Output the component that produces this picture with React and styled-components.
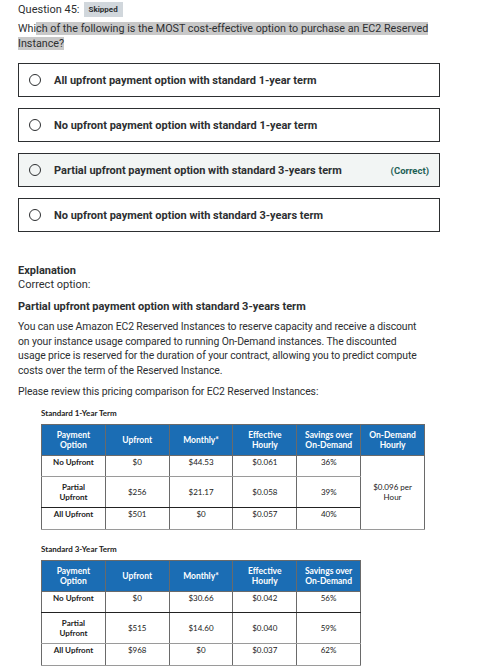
import React from 'react'
import styled, { createGlobalStyle } from 'styled-components'

const GlobalStyle = createGlobalStyle`
  body {
    margin: 0;
    background: #ffffff;
    color: #2d2f31;
    font-family: Roboto, "Liberation Sans", sans-serif;
  }
`;

const Page = styled.div`
  width: 422px;
  padding: 2px 0 0 18px;
`;

const QuestionHeader = styled.div`
  display: flex;
  align-items: center;
  gap: 4px;
  height: 15px;
  font-size: 11px;
`;

const Badge = styled.span`
  background: #d1d7dc;
  font-size: 8px;
  font-weight: 700;
  padding: 3px 5px;
  line-height: 9px;
`;

const Prompt = styled.p`
  margin: 4px 0 0;
  font-size: 10.75px;
  line-height: 15px;
`;

const Selected = styled.span`
  background: #c8c8c8;
`;

const Options = styled.div`
  display: flex;
  flex-direction: column;
  gap: 11px;
  margin-top: 12px;
`;

const Option = styled.div`
  display: flex;
  align-items: center;
  height: 32px;
  padding: 0 10px;
  border: 1px solid #2d2f31;
  background: ${(props) => (props.correct ? '#f2f5f4' : '#ffffff')};
`;

const Radio = styled.span`
  width: 10px;
  height: 10px;
  border: 1px solid #2d2f31;
  border-radius: 50%;
  flex-shrink: 0;
  margin-right: 13px;
`;

const OptionText = styled.span`
  flex: 1;
  font-size: 11px;
  font-weight: 700;
`;

const CorrectTag = styled.span`
  font-size: 9.5px;
  font-weight: 700;
  color: #1e6055;
`;

const Explanation = styled.div`
  margin-top: 32px;
  font-size: 11px;
  line-height: 14px;
`;

const Heading = styled.div`
  font-weight: 700;
`;

const Answer = styled.div`
  font-weight: 700;
  margin-top: 8px;
`;

const Para = styled.p`
  margin: 6px 0 0;
  font-size: 10.4px;
  letter-spacing: -0.1px;
  line-height: 14.7px;
`;

const TableBlock = styled.div`
  margin: ${(props) => props.top}px 0 0 23px;
  font-family: Lato, "Noto Sans", sans-serif;
  font-size: 8px;
`;

const TableTitle = styled.div`
  font-weight: 700;
  color: #222;
  margin-bottom: 6px;
`;

const Table = styled.table`
  border-collapse: collapse;
  table-layout: fixed;
  width: ${(props) => props.cols * 64}px;
  color: #222;
  text-align: center;
`;

const Head = styled.th`
  background: #1b6db4;
  color: #ffffff;
  font-weight: 700;
  font-size: 8.5px;
  height: 30px;
  line-height: 10px;
  padding: 0 2px;
  border: 1px solid #6a6a6a;
`;

const Cell = styled.td`
  height: ${(props) => props.h}px;
  line-height: 10px;
  padding: 0 2px;
  vertical-align: ${(props) => (props.mid ? 'middle' : 'top')};
  padding-top: ${(props) => (props.mid ? 0 : 1)}px;
  border-left: 1px solid #6a6a6a;
  border-right: 1px solid #6a6a6a;
  border-bottom: 1px solid ${(props) => (props.dark ? '#222' : '#9a9a9a')};
  font-weight: ${(props) => (props.label ? 700 : 400)};
`;

const oneYear = [
  ['No Upfront', '$0', '$44.53', '$0.061', '36%'],
  ['Partial Upfront', '$256', '$21.17', '$0.058', '39%'],
  ['All Upfront', '$501', '$0', '$0.057', '40%'],
];

const threeYear = [
  ['No Upfront', '$0', '$30.66', '$0.042', '56%'],
  ['Partial Upfront', '$515', '$14.60', '$0.040', '59%'],
  ['All Upfront', '$968', '$0', '$0.037', '62%'],
];

const heights = [19, 30, 20];

function Pricing({ title, rows, onDemand, darkRow, top }) {
  const cols = onDemand ? 6 : 5;
  return (
    <TableBlock top={top}>
      <TableTitle>{title}</TableTitle>
      <Table cols={cols}>
        <thead>
          <tr>
            <Head>Payment<br />Option</Head>
            <Head>Upfront</Head>
            <Head>Monthly*</Head>
            <Head>Effective<br />Hourly</Head>
            <Head>Savings over<br />On-Demand</Head>
            {onDemand && <Head>On-Demand<br />Hourly</Head>}
          </tr>
        </thead>
        <tbody>
          {rows.map((row, i) => (
            <tr key={row[0]}>
              {row.map((value, j) => (
                <Cell
                  key={j}
                  h={heights[i]}
                  mid={i === 1}
                  dark={i === darkRow}
                  label={j === 0}
                >
                  {j === 0 && i === 1 ? (
                    <>Partial<br />Upfront</>
                  ) : (
                    value
                  )}
                </Cell>
              ))}
              {onDemand && i === 0 && (
                <Cell rowSpan={3} mid h={69}>
                  $0.096 per<br />Hour
                </Cell>
              )}
            </tr>
          ))}
        </tbody>
      </Table>
    </TableBlock>
  );
}

const answers = [
  'All upfront payment option with standard 1-year term',
  'No upfront payment option with standard 1-year term',
  'Partial upfront payment option with standard 3-years term',
  'No upfront payment option with standard 3-years term',
];

export default function App() {
  return (
    <Page>
      <GlobalStyle />
      <QuestionHeader>
        Question 45: <Badge>Skipped</Badge>
      </QuestionHeader>
      <Prompt>
        Whi
        <Selected>
          ch of the following is the MOST cost-effective option to purchase an EC2 Reserved{' '}
          Instance?
        </Selected>
      </Prompt>
      <Options>
        {answers.map((text, i) => (
          <Option key={text} correct={i === 2}>
            <Radio />
            <OptionText>{text}</OptionText>
            {i === 2 && <CorrectTag>(Correct)</CorrectTag>}
          </Option>
        ))}
      </Options>
      <Explanation>
        <Heading>Explanation</Heading>
        <div>Correct option:</div>
        <Answer>Partial upfront payment option with standard 3-years term</Answer>
        <Para>
          You can use Amazon EC2 Reserved Instances to reserve capacity and receive a discount
          <br />
          on your instance usage compared to running On-Demand instances. The discounted
          <br />
          usage price is reserved for the duration of your contract, allowing you to predict compute
          <br />
          costs over the term of the Reserved Instance.
        </Para>
        <Para>Please review this pricing comparison for EC2 Reserved Instances:</Para>
      </Explanation>
      <Pricing title="Standard 1-Year Term" rows={oneYear} onDemand darkRow={1} top={8} />
      <Pricing title="Standard 3-Year Term" rows={threeYear} darkRow={0} top={14} />
    </Page>
  );
}
